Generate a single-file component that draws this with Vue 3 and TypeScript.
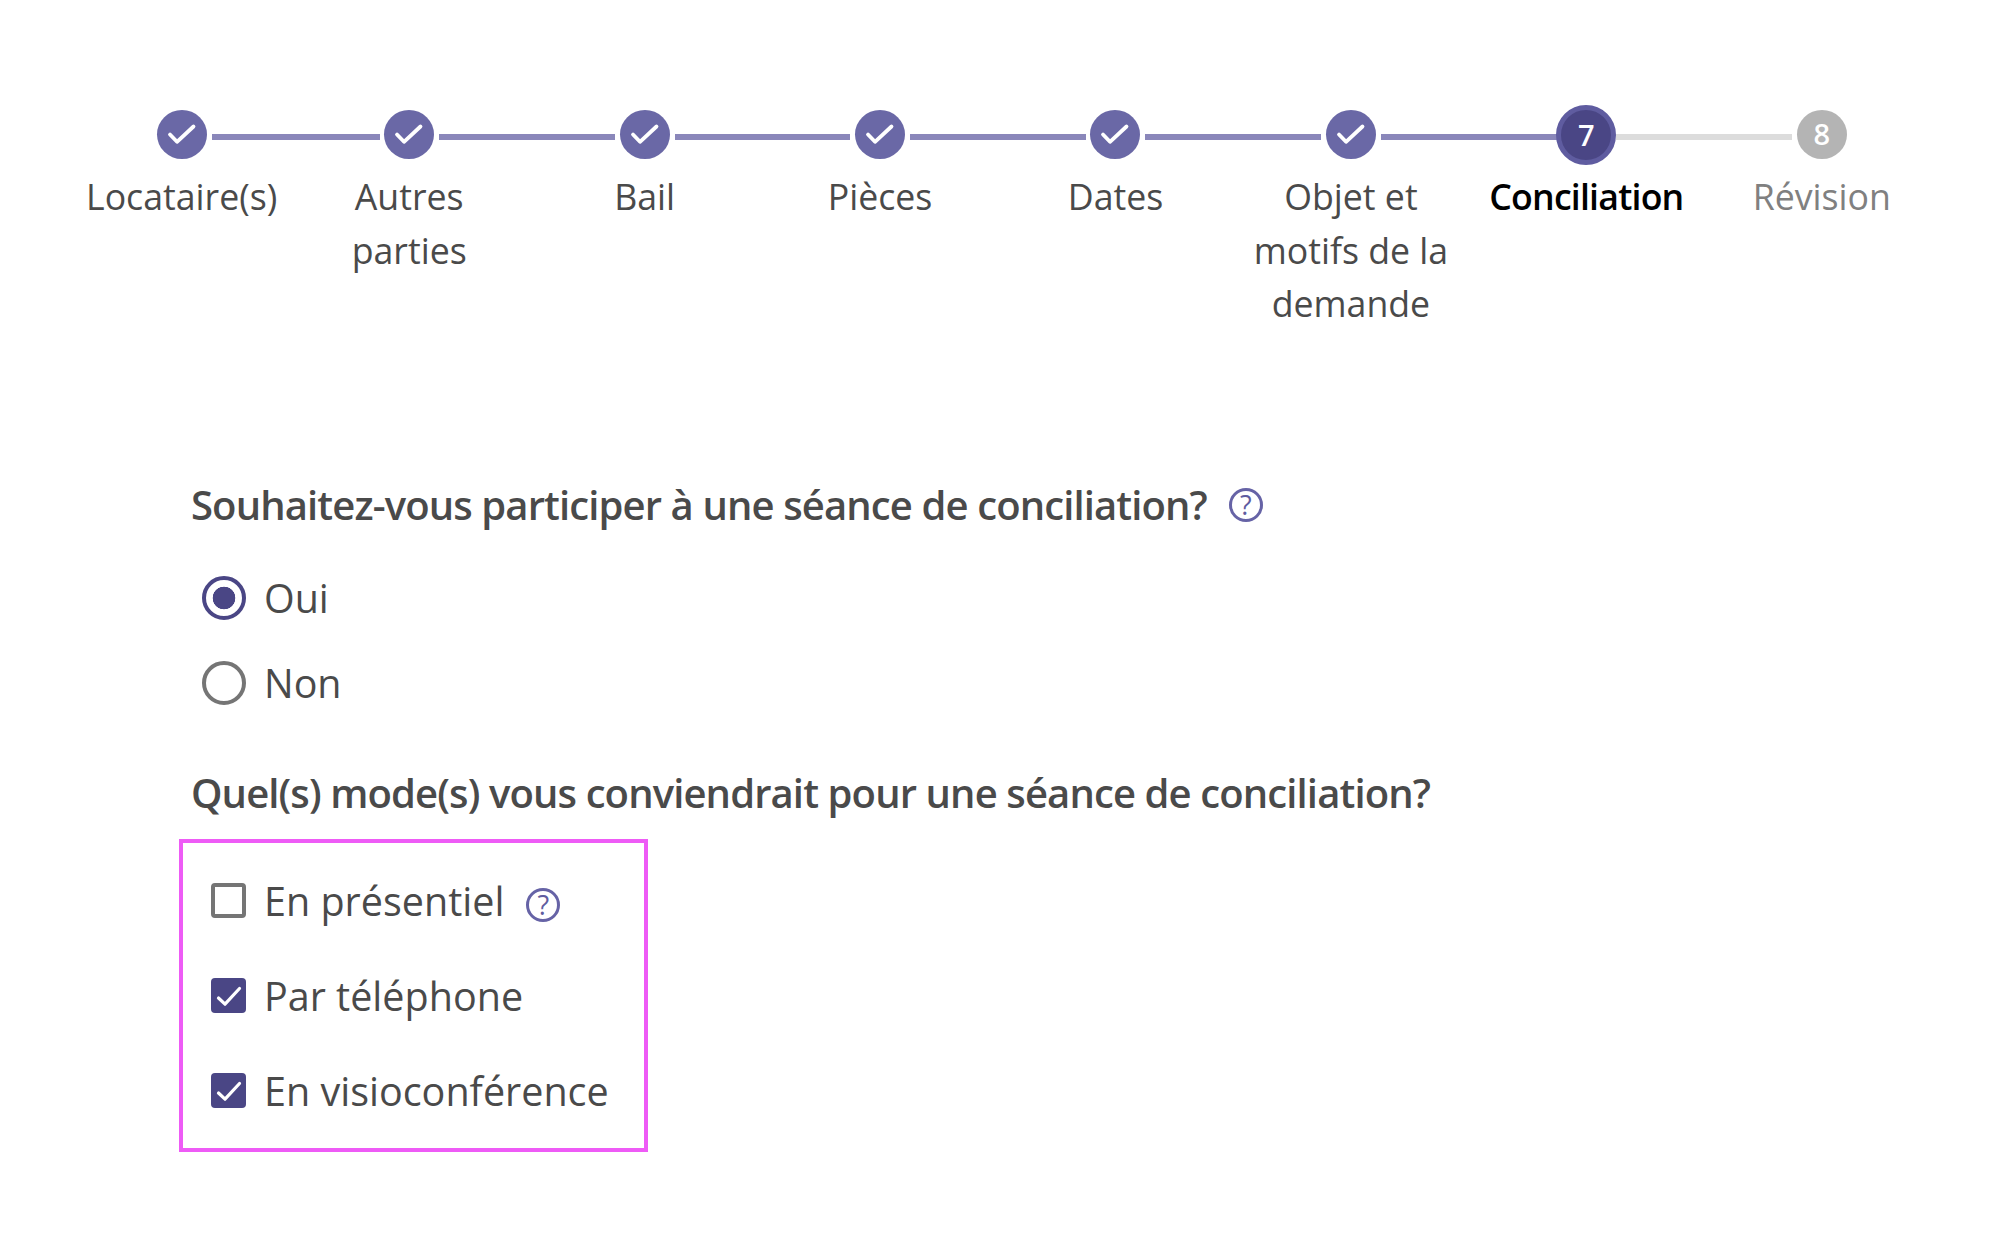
<script setup lang="ts">
type Step = { label: string; state: "done" | "active" | "todo"; num: number };

const steps: Step[] = [
  { label: "Locataire(s)", state: "done", num: 1 },
  { label: "Autres parties", state: "done", num: 2 },
  { label: "Bail", state: "done", num: 3 },
  { label: "Pièces", state: "done", num: 4 },
  { label: "Dates", state: "done", num: 5 },
  { label: "Objet et motifs de la demande", state: "done", num: 6 },
  { label: "Conciliation", state: "active", num: 7 },
  { label: "Révision", state: "todo", num: 8 },
];

const modes = [
  { label: "En présentiel", checked: false, help: true },
  { label: "Par téléphone", checked: true, help: false },
  { label: "En visioconférence", checked: true, help: false },
];
</script>

<template>
  <main class="page">
    <ol class="stepper">
      <li v-for="(step, i) in steps" :key="step.num" class="step" :class="step.state">
        <span v-if="i < steps.length - 1" class="line"></span>
        <span class="dot">
          <svg v-if="step.state === 'done'" width="32" height="26" viewBox="-16 -13 32 26">
            <path d="M-12 -0.5 L-5 6.8 L11.5 -8.5" fill="none" stroke="#fff" stroke-width="3.8" stroke-linecap="round" stroke-linejoin="round" />
          </svg>
          <template v-else>{{ step.num }}</template>
        </span>
        <span class="label">{{ step.label }}</span>
      </li>
    </ol>

    <section class="form">
      <h2 class="question">
        Souhaitez-vous participer à une séance de conciliation?
        <span class="help">?</span>
      </h2>
      <div class="radios">
        <label class="radio-row">
          <span class="radio on"></span>
          Oui
        </label>
        <label class="radio-row">
          <span class="radio"></span>
          Non
        </label>
      </div>

      <h2 class="question second">Quel(s) mode(s) vous conviendrait pour une séance de conciliation?</h2>
      <div class="modes">
        <label v-for="mode in modes" :key="mode.label" class="check-row">
          <span class="box" :class="{ on: mode.checked }">
            <svg v-if="mode.checked" width="35" height="35" viewBox="0 0 35 35">
              <path d="M7.5 20 L14 26.2 L28.5 10.5" fill="none" stroke="#fff" stroke-width="3.2" stroke-linecap="round" stroke-linejoin="round" />
            </svg>
          </span>
          {{ mode.label }}
          <span v-if="mode.help" class="help low">?</span>
        </label>
      </div>
    </section>
  </main>
</template>

<style>
body {
  margin: 0;
  background: #fff;
}
</style>

<style scoped>
.page {
  width: 1994px;
  height: 1248px;
  overflow: hidden;
  box-sizing: border-box;
  padding-top: 105px;
  font-family: "Open Sans", "Liberation Sans", sans-serif;
  color: #4a4a4a;
}

.stepper {
  display: flex;
  margin: 0;
  padding: 0 0 0 86px;
  list-style: none;
}

.step {
  position: relative;
  flex: 0 0 235.45px;
  display: flex;
  flex-direction: column;
  align-items: center;
  text-align: center;
}

.step:first-child {
  flex-basis: 191px;
  margin-right: 14.2px;
}

.line {
  position: absolute;
  top: 29px;
  left: calc(50% + 30px);
  width: 175.5px;
  height: 6px;
  background: #8a87ba;
}

.step:first-child .line {
  width: 168px;
}

.step:nth-child(6) .line {
  width: 176px;
}

.step.active .line {
  background: #dcdcdc;
  left: calc(50% + 30px);
  width: 176px;
}

.dot {
  width: 50px;
  height: 49px;
  margin-top: 5px;
  border-radius: 50%;
  display: flex;
  align-items: center;
  justify-content: center;
  background: #6a68a6;
  color: #fff;
  font-size: 29px;
  font-weight: 600;
  box-sizing: border-box;
}

.active .dot {
  width: 60px;
  height: 60px;
  margin-top: 0;
  padding-bottom: 2px;
  background: #4a4685;
  border: 5px solid #5f5ca0;
}

.todo .dot {
  padding-bottom: 2px;
  background: #b4b4b4;
}

.label {
  margin-top: 11px;
  width: 200px;
  font-size: 35.7px;
  line-height: 53.5px;
}

.step:first-child .label {
  width: auto;
  white-space: nowrap;
}

.active .label {
  margin-top: 5px;
  color: #000;
  font-weight: 600;
  letter-spacing: -0.8px;
}

.todo .label {
  color: #808080;
}

.form {
  margin-top: 148px;
  padding-left: 191px;
}

.question {
  display: flex;
  align-items: center;
  gap: 22px;
  margin: 0;
  font-size: 40px;
  line-height: 52px;
  font-weight: 600;
  letter-spacing: -0.88px;
}

.question.second {
  margin-top: 41px;
}

.help {
  flex: none;
  display: inline-flex;
  align-items: center;
  justify-content: center;
  width: 34px;
  height: 34px;
  box-sizing: border-box;
  border: 3px solid #6663a6;
  border-radius: 50%;
  color: #5f5ca0;
  font-size: 27px;
  font-weight: 400;
  letter-spacing: 0;
}

.help.low {
  margin-left: 4px;
  position: relative;
  top: 4px;
}

.radios {
  margin-top: 25px;
  padding-left: 11px;
}

.radio-row {
  display: flex;
  align-items: center;
  gap: 18px;
  height: 85px;
  font-size: 39.4px;
}

.radio {
  width: 44px;
  height: 44px;
  box-sizing: border-box;
  border: 4.5px solid #757575;
  border-radius: 50%;
  background: #fff;
}

.radio.on {
  border-color: #4a4685;
  background: radial-gradient(circle, #4a4685 0 11px, #fff 11.6px);
}

.modes {
  width: 469px;
  height: 313px;
  box-sizing: border-box;
  margin: 20px 0 0 -12px;
  padding: 10.5px 0 0 28px;
  border: 4px solid #ee5bf6;
}

.check-row {
  display: flex;
  align-items: center;
  gap: 18px;
  height: 95px;
  font-size: 39.5px;
}

.box {
  flex: none;
  width: 35px;
  height: 35px;
  box-sizing: border-box;
  border: 4.5px solid #757575;
  border-radius: 4px;
  display: flex;
  align-items: center;
  justify-content: center;
}

.box.on {
  background: #4a4685;
  border: 0;
}
</style>
